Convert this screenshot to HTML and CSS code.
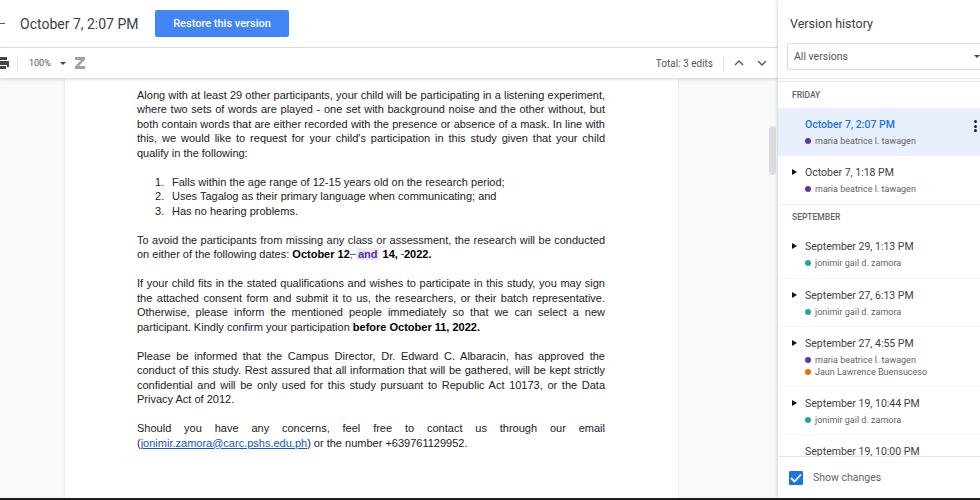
FILE: index.html
```html
<!DOCTYPE html>
<html lang="en">
<head>
  <meta charset="UTF-8">
  <title>Version history</title>
  <link rel="stylesheet" href="styles.css">
</head>
<body>
  <div class="app">
    <div class="main">
      <div class="topbar">
        <span class="back-dash"></span>
        <span class="version-title">October 7, 2:07 PM</span>
        <button class="restore-btn">Restore this version</button>
      </div>
      <div class="toolbar">
        <svg class="print-icon" width="12" height="12" viewBox="0 0 12 12"><path d="M2 0h8v3H2zM0 4h12v6H10V8H2v2H0zM3 9h6v3H3z" fill="#444"/></svg>
        <span class="tool-sep"></span>
        <span class="zoom-value">100%</span>
        <span class="caret"></span>
        <svg class="paint-icon" width="10" height="12" viewBox="0 0 10 12"><path d="M0 0h10v2.500L4 9h6v3H0V9.500L6 3H0z" fill="#a3a3a3"/></svg>
        <span class="toolbar-fill"></span>
        <span class="total-edits">Total: 3 edits</span>
        <span class="tool-sep tool-sep-right"></span>
        <svg class="chev" width="10" height="6" viewBox="0 0 10 6"><path d="M1 5l4-4 4 4" fill="none" stroke="#555" stroke-width="1.300"/></svg>
        <svg class="chev" width="10" height="6" viewBox="0 0 10 6"><path d="M1 1l4 4 4-4" fill="none" stroke="#555" stroke-width="1.300"/></svg>
      </div>
      <div class="canvas">
        <div class="page">
          <p>Along with at least 29 other participants, your child will be participating in a listening experiment, where two sets of words are played - one set with background noise and the other without, but both contain words that are either recorded with the presence or absence of a mask. In line with this, we would like to request for your child's participation in this study given that your child qualify in the following:</p>
          <ol>
            <li>Falls within the age range of 12-15 years old on the research period;</li>
            <li>Uses Tagalog as their primary language when communicating; and</li>
            <li>Has no hearing problems.</li>
          </ol>
          <p>To avoid the participants from missing any class or assessment, the research will be conducted on either of the following dates: <b>October 12<span class="del">, </span><span class="ins">and</span> 14, <span class="del">&nbsp;</span>2022.</b></p>
          <p>If your child fits in the stated qualifications and wishes to participate in this study, you may sign the attached consent form and submit it to us, the researchers, or their batch representative. Otherwise, please inform the mentioned people immediately so that we can select a new participant. Kindly confirm your participation <b>before October 11, 2022.</b></p>
          <p>Please be informed that the Campus Director, Dr. Edward C. Albaracin, has approved the conduct of this study. Rest assured that all information that will be gathered, will be kept strictly confidential and will be only used for this study pursuant to Republic Act 10173, or the Data Privacy Act of 2012.</p>
          <p>Should you have any concerns, feel free to contact us through our email (<a href="#">jonimir.zamora@carc.pshs.edu.ph</a>) or the number +639761129952.</p>
        </div>
        <div class="scroll-thumb"></div>
      </div>
    </div>
    <aside class="sidebar">
      <div class="side-head">
        <h2>Version history</h2>
        <div class="select-box">All versions<span class="caret"></span></div>
      </div>
      <div class="version-list">
        <div class="day-label">FRIDAY</div>
        <div class="version selected">
          <div class="version-date">October 7, 2:07 PM</div>
          <div class="author"><i class="dot purple"></i>maria beatrice l. tawagen</div>
          <span class="more"><i></i><i></i><i></i></span>
        </div>
        <div class="version">
          <div class="version-date"><i class="arrow"></i>October 7, 1:18 PM</div>
          <div class="author"><i class="dot purple"></i>maria beatrice l. tawagen</div>
        </div>
        <div class="day-label day-rule">SEPTEMBER</div>
        <div class="version">
          <div class="version-date"><i class="arrow"></i>September 29, 1:13 PM</div>
          <div class="author"><i class="dot teal"></i>jonimir gail d. zamora</div>
        </div>
        <div class="version rule">
          <div class="version-date"><i class="arrow"></i>September 27, 6:13 PM</div>
          <div class="author"><i class="dot teal"></i>jonimir gail d. zamora</div>
        </div>
        <div class="version rule">
          <div class="version-date"><i class="arrow"></i>September 27, 4:55 PM</div>
          <div class="author"><i class="dot purple"></i>maria beatrice l. tawagen</div>
          <div class="author"><i class="dot orange"></i>Jaun Lawrence Buensuceso</div>
        </div>
        <div class="version rule">
          <div class="version-date"><i class="arrow"></i>September 19, 10:44 PM</div>
          <div class="author"><i class="dot teal"></i>jonimir gail d. zamora</div>
        </div>
        <div class="version rule">
          <div class="version-date">September 19, 10:00 PM</div>
        </div>
      </div>
      <div class="side-foot">
        <span class="checkbox"><svg width="12" height="10" viewBox="0 0 12 10"><path d="M1 5l3.500 3.500L11 1.500" fill="none" stroke="#fff" stroke-width="1.800"/></svg></span>
        <span>Show changes</span>
      </div>
    </aside>
  </div>
</body>
</html>
```
FILE: styles.css
```css
* {
  box-sizing: border-box;
}

html, body {
  height: 100%;
}

body {
  margin: 0;
  overflow: hidden;
  font-family: Roboto, "Liberation Sans", sans-serif;
  color: #3c4043;
  background: #1c1c1c;
}

.app {
  display: flex;
  height: 498px;
  background: #fff;
  overflow: hidden;
}

/* Left part */
.main {
  flex: 1;
  min-width: 0;
  display: flex;
  flex-direction: column;
}

.topbar {
  height: 48px;
  display: flex;
  align-items: center;
  border-bottom: 1px solid #e3e5e7;
}

.back-dash {
  width: 5px;
  height: 1px;
  background: #555;
}

.version-title {
  margin-left: 15px;
  font-size: 14px;
  color: #3c4043;
  width: 135px;
}

.restore-btn {
  width: 134px;
  height: 27px;
  border: none;
  border-radius: 2px;
  background: #4285f4;
  color: #fff;
  font-family: Roboto, sans-serif;
  font-size: 11px;
  font-weight: 500;
}

.toolbar {
  height: 30px;
  display: flex;
  align-items: center;
  padding-right: 11px;
  box-shadow: 0 1px 3px rgba(60, 64, 67, 0.25);
  position: relative;
  z-index: 1;
}

.print-icon {
  margin-left: -3px;
}

.tool-sep {
  width: 1px;
  height: 15px;
  margin-left: 8px;
  background: #e0e2e4;
}

.zoom-value {
  margin-left: 11px;
  font-size: 9px;
  color: #555;
  width: 31px;
}

.caret {
  width: 0;
  height: 0;
  border-left: 3px solid transparent;
  border-right: 3px solid transparent;
  border-top: 3px solid #444;
}

.paint-icon {
  margin-left: 9px;
}

.toolbar-fill {
  flex: 1;
}

.total-edits {
  font-size: 10px;
  color: #555;
}

.tool-sep-right {
  margin-left: 10px;
  margin-right: 10px;
}

.chev {
  margin-right: 13px;
}

.chev:last-child {
  margin-right: 0;
}

.canvas {
  flex: 1;
  position: relative;
  background: #f8f9fa;
  padding-left: 65px;
  overflow: hidden;
}

.page {
  width: 613px;
  height: 100%;
  background: #fff;
  padding: 9.500px 73px 0 72px;
  box-shadow: 0 0 2px rgba(60, 64, 67, 0.2);
  font-family: "Liberation Sans", Arial, sans-serif;
  font-size: 11px;
  line-height: 14.500px;
  color: #222;
}

.page p {
  margin: 0 0 14.500px;
  text-align: justify;
}

.page ol {
  margin: 0 0 14.500px;
  padding-left: 18px;
  list-style: none;
  counter-reset: item;
}

.page li {
  counter-increment: item;
}

.page li::before {
  content: counter(item) ".";
  display: inline-block;
  width: 17px;
}

.page b {
  color: #000;
}

.page a {
  color: #1155cc;
}

.del {
  color: #2e7d6b;
  text-decoration: line-through;
  font-weight: 400;
}

.ins {
  color: #512da8;
  background: #ede7f6;
  padding: 0 2px;
}

.scroll-thumb {
  position: absolute;
  top: 48px;
  right: 2px;
  width: 7px;
  height: 49px;
  border-radius: 4px;
  background: #dadce0;
}

/* Sidebar */
.sidebar {
  width: 202px;
  flex-shrink: 0;
  display: flex;
  flex-direction: column;
  box-shadow: -1px 0 3px rgba(60, 64, 67, 0.2);
  background: #fff;
  position: relative;
  z-index: 2;
}

.side-head {
  height: 82px;
  padding: 16px 0 0 9px;
  border-bottom: 4px double #e3e5e7;
  overflow: hidden;
}

.side-head h2 {
  margin: 0 0 12px 3px;
  font-size: 12.500px;
  font-weight: 400;
  color: #3c4043;
}

.select-box {
  width: 200px;
  height: 27px;
  display: flex;
  align-items: center;
  justify-content: space-between;
  padding: 0 6px;
  border: 1px solid #dadce0;
  border-radius: 2px;
  font-size: 10.500px;
  color: #555;
}

.version-list {
  flex: 1;
  overflow: hidden;
  position: relative;
}

.day-label {
  height: 26px;
  padding: 8px 0 0 14px;
  font-size: 8.500px;
  font-weight: 500;
  color: #5f6368;
}

.day-rule {
  padding-top: 7px;
  border-top: 1px solid #eceef0;
}

.version {
  position: relative;
  height: 48px;
  padding: 10px 0 0 27px;
}

.version.rule {
  border-top: 1px solid #f1f3f4;
}

.version:has(.author + .author) {
  height: 60px;
}

.version.selected {
  background: #e8f0fe;
}

.version-date {
  position: relative;
  margin-bottom: 6px;
  font-size: 10.500px;
  line-height: 13px;
  color: #3c4043;
}

.selected .version-date {
  color: #1a73e8;
  font-weight: 500;
}

.arrow {
  position: absolute;
  left: -13px;
  top: 3px;
  border-top: 3.500px solid transparent;
  border-bottom: 3.500px solid transparent;
  border-left: 5px solid #111;
}

.author {
  display: flex;
  align-items: center;
  margin-bottom: 4px;
  font-size: 9px;
  line-height: 8px;
  color: #5f6368;
}

.dot {
  width: 6px;
  height: 6px;
  margin-right: 4px;
  border-radius: 50%;
}

.purple {
  background: #5e35b1;
}

.teal {
  background: #26a69a;
}

.orange {
  background: #ef6c00;
}

.more {
  position: absolute;
  top: 12px;
  right: 3px;
  display: flex;
  flex-direction: column;
  gap: 1.500px;
}

.more i {
  width: 3px;
  height: 3px;
  border-radius: 50%;
  background: #222;
}

.side-foot {
  height: 42px;
  display: flex;
  align-items: center;
  gap: 10px;
  padding-left: 11px;
  border-top: 1px solid #e3e5e7;
  font-size: 10.500px;
  color: #5f6368;
  background: #fff;
}

.checkbox {
  width: 14px;
  height: 14px;
  display: flex;
  align-items: center;
  justify-content: center;
  border-radius: 1px;
  background: #1a73e8;
}
```
